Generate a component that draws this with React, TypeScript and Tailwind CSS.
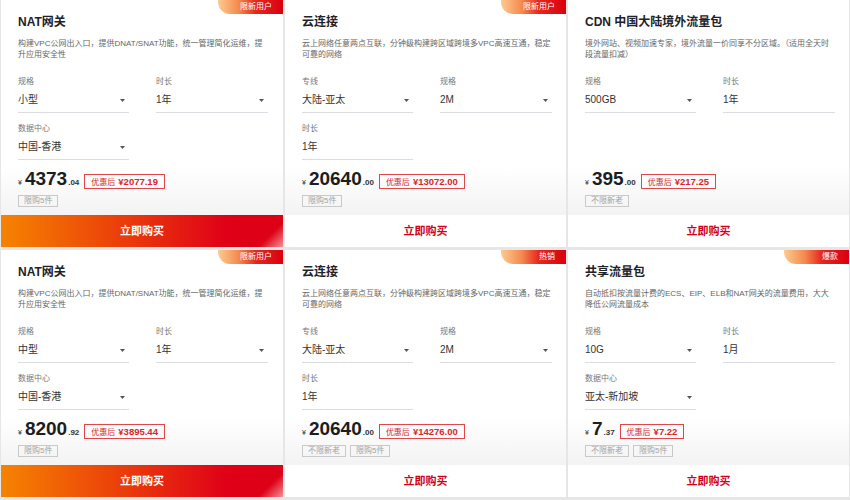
import React from 'react'

type Field = { label: string; value: string; arrow?: boolean }

type Card = {
  title: string
  desc: string
  badge?: string
  fields: Field[]
  int: string
  dec: string
  disc: string
  tags: string[]
  primary?: boolean
}

const cards: Card[] = [
  {
    title: 'NAT网关',
    desc: '构建VPC公网出入口，提供DNAT/SNAT功能，统一管理简化运维，提升应用安全性',
    badge: '限新用户',
    fields: [
      { label: '规格', value: '小型', arrow: true },
      { label: '时长', value: '1年', arrow: true },
      { label: '数据中心', value: '中国-香港', arrow: true },
    ],
    int: '4373',
    dec: '.04',
    disc: '¥2077.19',
    tags: ['限购5件'],
    primary: true,
  },
  {
    title: '云连接',
    desc: '云上网络任意两点互联，分钟级构建跨区域跨境多VPC高速互通，稳定可靠的网络',
    badge: '限新用户',
    fields: [
      { label: '专线', value: '大陆-亚太', arrow: true },
      { label: '规格', value: '2M', arrow: true },
      { label: '时长', value: '1年' },
    ],
    int: '20640',
    dec: '.00',
    disc: '¥13072.00',
    tags: ['限购5件'],
  },
  {
    title: 'CDN 中国大陆境外流量包',
    desc: '境外网站、视频加速专家，境外流量一价同享不分区域。（适用全天时段流量扣减）',
    fields: [
      { label: '规格', value: '500GB', arrow: true },
      { label: '时长', value: '1年' },
    ],
    int: '395',
    dec: '.00',
    disc: '¥217.25',
    tags: ['不限新老'],
  },
  {
    title: 'NAT网关',
    desc: '构建VPC公网出入口，提供DNAT/SNAT功能，统一管理简化运维，提升应用安全性',
    badge: '限新用户',
    fields: [
      { label: '规格', value: '中型', arrow: true },
      { label: '时长', value: '1年', arrow: true },
      { label: '数据中心', value: '中国-香港', arrow: true },
    ],
    int: '8200',
    dec: '.92',
    disc: '¥3895.44',
    tags: ['限购5件'],
    primary: true,
  },
  {
    title: '云连接',
    desc: '云上网络任意两点互联，分钟级构建跨区域跨境多VPC高速互通，稳定可靠的网络',
    badge: '热销',
    fields: [
      { label: '专线', value: '大陆-亚太', arrow: true },
      { label: '规格', value: '2M', arrow: true },
      { label: '时长', value: '1年' },
    ],
    int: '20640',
    dec: '.00',
    disc: '¥14276.00',
    tags: ['不限新老', '限购5件'],
  },
  {
    title: '共享流量包',
    desc: '自动抵扣按流量计费的ECS、EIP、ELB和NAT网关的流量费用，大大降低公网流量成本',
    badge: '爆款',
    fields: [
      { label: '规格', value: '10G', arrow: true },
      { label: '时长', value: '1月' },
      { label: '数据中心', value: '亚太-新加坡', arrow: true },
    ],
    int: '7',
    dec: '.37',
    disc: '¥7.22',
    tags: ['不限新老', '限购5件'],
  },
]

function Caret() {
  return (
    <svg width="5" height="3" viewBox="0 0 5 3" className="shrink-0">
      <polygon points="0,0 5,0 2.5,3" fill="#555" />
    </svg>
  )
}

function ProductCard({ card }: { card: Card }) {
  return (
    <div className="relative flex flex-col bg-white overflow-hidden">
      {card.badge && (
        <div className="absolute top-0 right-0 w-[65px] h-[14px] rounded-bl-[12px] bg-[linear-gradient(90deg,#fdcb90_0%,#f5894e_32%,#e5281f_58%,#d9000f_100%)] flex items-center justify-end pr-[11px]">
          <span className="text-[8px] leading-none text-white">{card.badge}</span>
        </div>
      )}

      {/* body */}
      <div className="flex-1 flex flex-col pt-[13px] pl-[17px] pr-[15px] pb-[8px] bg-[linear-gradient(180deg,#ffffff_78%,#f3f3f3_100%)]">
        <h3 className="text-[12px] leading-[18px] font-bold text-[#1f2227]">{card.title}</h3>
        <p className="mt-[7px] text-[8px] leading-[11px] text-[#666]">{card.desc}</p>

        <div className="mt-[16px] grid grid-cols-[111px_112px] gap-x-[27px] gap-y-[10px]">
          {card.fields.map((f, i) => (
            <div key={i}>
              <div className="text-[8px] leading-[11px] text-[#777]">{f.label}</div>
              <div className="mt-[6px] flex items-center justify-between pr-[4px] pb-[5px] border-b border-[#dcdde3]">
                <span className="text-[10px] leading-[14px] text-[#333]">{f.value}</span>
                {f.arrow && <Caret />}
              </div>
            </div>
          ))}
        </div>

        <div className="mt-auto">
          <div className="flex items-baseline">
            <span className="text-[7px] text-[#333] mr-[3px]">¥</span>
            <span className="text-[19px] leading-[18px] font-bold text-[#1b1d22]">{card.int}</span>
            <span className="text-[8px] font-bold text-[#333] ml-[1px]">{card.dec}</span>
            <span className="ml-[5px] inline-flex items-baseline h-[15px] px-[6px] border border-[#e0464a] text-[#d8262d]">
              <span className="text-[8px] leading-[13px]">优惠后</span>
              <span className="ml-[3px] text-[9.5px] leading-[13px] font-bold">{card.disc}</span>
            </span>
          </div>
          <div className="mt-[6px] flex gap-[4px]">
            {card.tags.map((t) => (
              <span
                key={t}
                className="h-[12px] px-[5px] border border-[#c9c9c9] text-[8px] leading-[10px] text-[#a3a3a3] flex items-center"
              >
                {t}
              </span>
            ))}
          </div>
        </div>
      </div>

      {/* button */}
      {card.primary ? (
        <button className="h-[32px] w-full bg-[linear-gradient(135deg,rgba(255,255,255,0)_92%,rgba(255,190,190,0.75)_100%),linear-gradient(90deg,#f68300_0%,#ea3a0b_45%,#e00018_80%,#dc0016_100%)] text-white text-[11px] font-bold">
          立即购买
        </button>
      ) : (
        <button className="h-[32px] w-full bg-white text-[#d0021b] text-[11px] font-bold">立即购买</button>
      )}
    </div>
  )
}

export default function App() {
  return (
    <div className="w-[850px] h-[500px] bg-[#e6e6e6] font-['Liberation_Sans','Noto_Sans_CJK_SC',sans-serif]">
      <div className="grid grid-cols-[282px_281px_281px] grid-rows-[247px_247px] gap-x-[2px] gap-y-[3px] pl-[1px]">
        {cards.map((c, i) => (
          <ProductCard key={i} card={c} />
        ))}
      </div>
    </div>
  )
}
